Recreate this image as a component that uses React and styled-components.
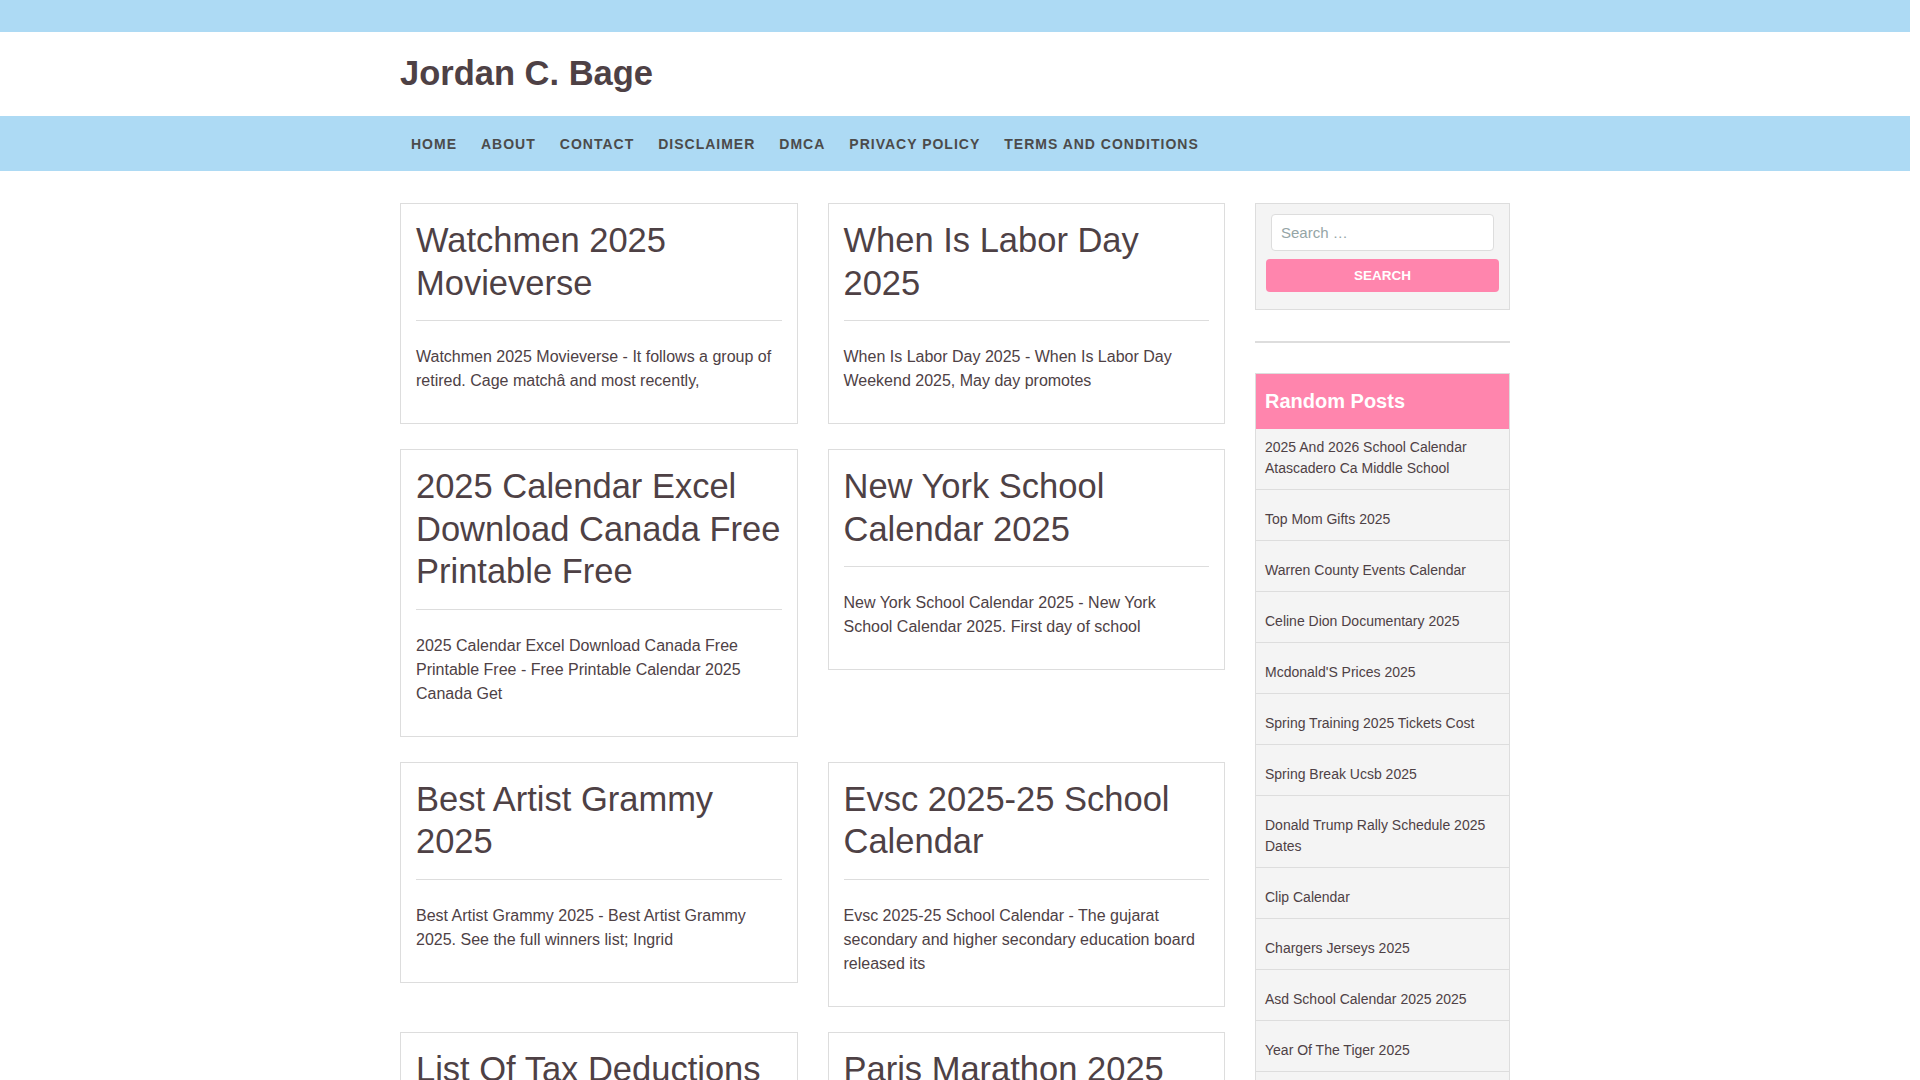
import React from "react";
import styled, { createGlobalStyle } from "styled-components";

const blue = "#addaf4";
const pink = "#ff85ad";
const ink = "#4e4145";
const line = "#dddddd";

// the reference was taken with a classic 10px scrollbar gutter on the right
const GlobalStyle = createGlobalStyle`
  html::-webkit-scrollbar {
    width: 10px;
    background: #fff;
  }
  html::-webkit-scrollbar-thumb {
    background: #111;
    border-radius: 5px;
    border: 2px solid #fff;
  }
  body {
    margin: 0;
    padding-right: 10px;
    background: #fff;
    color: ${ink};
    font-family: "Liberation Sans", Arial, sans-serif;
  }
`;

const TopBar = styled.div`
  height: 32px;
  background: ${blue};
`;

const Container = styled.div`
  width: 1110px;
  margin: 0 auto;
`;

const Header = styled.header`
  height: 84px;
  display: flex;
  align-items: center;
`;

const SiteTitle = styled.h1`
  margin: 0;
  font-size: 34.5px;
  line-height: 1.2;
  font-weight: 700;
  color: ${ink};
`;

const NavBar = styled.nav`
  height: 55px;
  background: ${blue};
`;

const NavList = styled.ul`
  list-style: none;
  margin: 0 0 0 -1px;
  padding: 0;
  height: 55px;
  display: flex;
  align-items: center;
`;

const NavItem = styled.li`
  padding: 0 12px;
  font-size: 14px;
  font-weight: 700;
  letter-spacing: 1px;
  text-transform: uppercase;
  color: #4b4b4b;
  white-space: nowrap;
`;

const Main = styled(Container)`
  display: grid;
  grid-template-columns: 825px 255px;
  column-gap: 30px;
  align-items: start;
  padding: 32px 0 40px;
`;

const Posts = styled.div`
  display: grid;
  grid-template-columns: 1fr 1fr;
  column-gap: 30px;
  row-gap: 25px;
  align-items: start;
`;

const Card = styled.article`
  border: 1px solid ${line};
  padding: 15px;
  background: #fff;
`;

const CardTitle = styled.h2`
  margin: 0;
  font-size: 34.5px;
  line-height: 42.5px;
  font-weight: 400;
  color: ${ink};
`;

const Rule = styled.hr`
  border: 0;
  border-top: 1px solid ${line};
  margin: 16px 0 24px;
`;

const Excerpt = styled.p`
  margin: 0 0 15px;
  font-size: 16px;
  line-height: 24px;
  color: ${ink};
`;

const Sidebar = styled.aside`
  display: flex;
  flex-direction: column;
`;

const SearchBox = styled.form`
  border: 1px solid ${line};
  background: #f4f4f4;
  padding: 10px 10px 17px;
  display: flex;
  flex-direction: column;
`;

const SearchInput = styled.input`
  box-sizing: border-box;
  height: 37px;
  margin: 0 5px;
  padding: 0 9px;
  border: 1px solid ${line};
  border-radius: 4px;
  background: #fff;
  font-family: "Liberation Sans", Arial, sans-serif;
  font-size: 15px;
  color: ${ink};
  outline: none;

  &::placeholder {
    color: #95a5a6;
  }
`;

const SearchButton = styled.button`
  margin-top: 8px;
  height: 33px;
  border: 0;
  border-radius: 4px;
  background: ${pink};
  color: #fff;
  font-family: "Liberation Sans", Arial, sans-serif;
  font-size: 13.5px;
  font-weight: 700;
  text-transform: uppercase;
  cursor: pointer;
`;

const Divider = styled.div`
  border-top: 2px solid ${line};
  margin: 31px 0 30px;
`;

const Widget = styled.section`
  border: 1px solid ${line};
  border-bottom: 0;
  background: #f4f4f4;
`;

const WidgetTitle = styled.h3`
  margin: 0;
  padding: 16px 9px 17px;
  background: ${pink};
  color: #fff;
  font-size: 20px;
  line-height: 22px;
  font-weight: 700;
`;

const PostList = styled.ul`
  list-style: none;
  margin: 0;
  padding: 0;
`;

const PostItem = styled.li`
  padding: 19px 9px 10px;
  border-bottom: 1px solid ${line};
  font-size: 14px;
  line-height: 21px;
  color: ${ink};

  &:first-child {
    padding-top: 8px;
  }
`;

const Footer = styled.footer`
  background: ${blue};
  padding: 30px 0;
  font-size: 14px;
  color: #4b4b4b;
`;

const navItems = ["Home", "About", "Contact", "Disclaimer", "DMCA", "Privacy Policy", "Terms and Conditions"];

const posts = [
  ["Watchmen 2025 Movieverse", "Watchmen 2025 Movieverse - It follows a group of retired. Cage matchâ and most recently,"],
  ["When Is Labor Day 2025", "When Is Labor Day 2025 - When Is Labor Day Weekend 2025, May day promotes"],
  ["2025 Calendar Excel Download Canada Free Printable Free", "2025 Calendar Excel Download Canada Free Printable Free - Free Printable Calendar 2025 Canada Get"],
  ["New York School Calendar 2025", "New York School Calendar 2025 - New York School Calendar 2025. First day of school"],
  ["Best Artist Grammy 2025", "Best Artist Grammy 2025 - Best Artist Grammy 2025. See the full winners list; Ingrid"],
  ["Evsc 2025-25 School Calendar", "Evsc 2025-25 School Calendar - The gujarat secondary and higher secondary education board released its"],
  ["List Of Tax Deductions 2025", "List Of Tax Deductions 2025 - The standard deduction for the 2025 tax year has been raised for"],
  ["Paris Marathon 2025 Route", "Paris Marathon 2025 Route - The course starts on the Champs-Élysées and finishes on"],
  ["Ucla Academic Calendar 2025", "Ucla Academic Calendar 2025 - Find the important dates of the academic year"],
  ["Fall Colors 2025 Forecast", "Fall Colors 2025 Forecast - The peak foliage map shows when the leaves will"],
  ["Nfl Draft 2025 Order", "Nfl Draft 2025 Order - The full order of picks for every round of the"],
  ["Easter Sunday 2025 Date", "Easter Sunday 2025 Date - Easter falls on a different date each year"],
  ["Tax Brackets 2025 Single", "Tax Brackets 2025 Single - The income ranges for each bracket were adjusted"],
  ["Spring Break 2025 Florida", "Spring Break 2025 Florida - Plan the trip with the best beaches and events"],
  ["Holiday Calendar 2025 Printable", "Holiday Calendar 2025 Printable - Download a free calendar with all federal holidays"],
  ["Super Bowl 2025 Halftime", "Super Bowl 2025 Halftime - The performer for the halftime show has been"],
];

const randomPosts = [
  "2025 And 2026 School Calendar Atascadero Ca Middle School",
  "Top Mom Gifts 2025",
  "Warren County Events Calendar",
  "Celine Dion Documentary 2025",
  "Mcdonald'S Prices 2025",
  "Spring Training 2025 Tickets Cost",
  "Spring Break Ucsb 2025",
  "Donald Trump Rally Schedule 2025 Dates",
  "Clip Calendar",
  "Chargers Jerseys 2025",
  "Asd School Calendar 2025 2025",
  "Year Of The Tiger 2025",
  "Ncaa Football Schedule 2025",
  "Lunar New Year 2025 Animal",
];

export default function App() {
  return (
    <>
      <GlobalStyle />
      <TopBar />
      <Container>
        <Header>
          <SiteTitle>Jordan C. Bage</SiteTitle>
        </Header>
      </Container>
      <NavBar>
        <Container>
          <NavList>
            {navItems.map((item) => (
              <NavItem key={item}>{item}</NavItem>
            ))}
          </NavList>
        </Container>
      </NavBar>
      <Main>
        <Posts>
          {posts.map(([title, text]) => (
            <Card key={title}>
              <CardTitle>{title}</CardTitle>
              <Rule />
              <Excerpt>{text}</Excerpt>
            </Card>
          ))}
        </Posts>
        <Sidebar>
          <SearchBox onSubmit={(e) => e.preventDefault()}>
            <SearchInput type="search" placeholder="Search …" />
            <SearchButton type="submit">Search</SearchButton>
          </SearchBox>
          <Divider />
          <Widget>
            <WidgetTitle>Random Posts</WidgetTitle>
            <PostList>
              {randomPosts.map((p) => (
                <PostItem key={p}>{p}</PostItem>
              ))}
            </PostList>
          </Widget>
        </Sidebar>
      </Main>
      <Footer>
        <Container>Copyright © 2025 Jordan C. Bage</Container>
      </Footer>
    </>
  );
}
